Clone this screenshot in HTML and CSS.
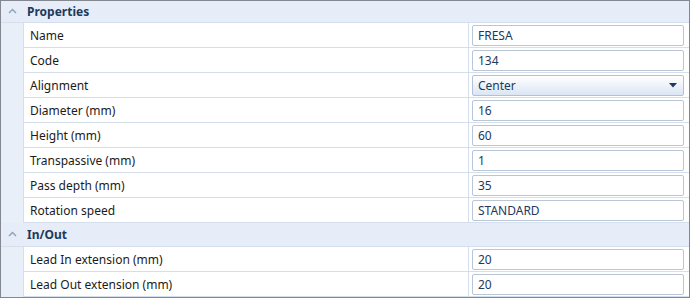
FILE: index.html
```html
<!DOCTYPE html>
<html lang="en">
  <head>
    <meta charset="UTF-8" />
    <title>Tool Properties</title>
    <link rel="stylesheet" href="styles.css">
  </head>
  <body>
    <div class="grid">
      <!-- Properties section -->
      <div class="section-header">
        <span class="chevron"><svg width="9" height="6" viewBox="0 0 9 6"><path d="M1 5 L4.5 1.5 L8 5" fill="none" stroke="#8aa0bd" stroke-width="1.4"/></svg></span>
        <span class="section-title">Properties</span>
      </div>
      <div class="row">
        <div class="gutter"></div>
        <div class="label">Name</div>
        <div class="value"><div class="field">FRESA</div></div>
      </div>
      <div class="row">
        <div class="gutter"></div>
        <div class="label">Code</div>
        <div class="value"><div class="field">134</div></div>
      </div>
      <div class="row">
        <div class="gutter"></div>
        <div class="label">Alignment</div>
        <div class="value">
          <div class="field combo">
            <span>Center</span>
            <svg class="arrow" width="8" height="5" viewBox="0 0 8 5"><path d="M0 0 H8 L4 4.5 Z" fill="#1e395b"/></svg>
          </div>
        </div>
      </div>
      <div class="row">
        <div class="gutter"></div>
        <div class="label">Diameter (mm)</div>
        <div class="value"><div class="field">16</div></div>
      </div>
      <div class="row">
        <div class="gutter"></div>
        <div class="label">Height (mm)</div>
        <div class="value"><div class="field">60</div></div>
      </div>
      <div class="row">
        <div class="gutter"></div>
        <div class="label">Transpassive (mm)</div>
        <div class="value"><div class="field">1</div></div>
      </div>
      <div class="row">
        <div class="gutter"></div>
        <div class="label">Pass depth (mm)</div>
        <div class="value"><div class="field">35</div></div>
      </div>
      <div class="row">
        <div class="gutter"></div>
        <div class="label">Rotation speed</div>
        <div class="value"><div class="field">STANDARD</div></div>
      </div>

      <!-- In/Out section -->
      <div class="section-header tall">
        <span class="chevron"><svg width="9" height="6" viewBox="0 0 9 6"><path d="M1 5 L4.5 1.5 L8 5" fill="none" stroke="#8aa0bd" stroke-width="1.4"/></svg></span>
        <span class="section-title">In/Out</span>
      </div>
      <div class="row">
        <div class="gutter"></div>
        <div class="label">Lead In extension (mm)</div>
        <div class="value"><div class="field">20</div></div>
      </div>
      <div class="row">
        <div class="gutter"></div>
        <div class="label">Lead Out extension (mm)</div>
        <div class="value"><div class="field">20</div></div>
      </div>
    </div>
  </body>
</html>
```

FILE: styles.css
```css
/* Page */
body {
  margin: 0;
  font-family: "Noto Sans", "Open Sans", sans-serif;
  font-size: 12px;
  background: #ffffff;
}

/* Property grid frame */
.grid {
  width: 690px;
  height: 298px;
  box-sizing: border-box;
  border: 1px solid #828790;
  background: #e9eff8;
  display: flex;
  flex-direction: column;
  overflow: hidden;
}

/* Category header */
.section-header {
  height: 21px;
  display: flex;
  align-items: center;
  background: #e6edf8;
  border-bottom: 1px solid #d4dfee;
  flex-shrink: 0;
}

.section-header.tall {
  height: 23px;
}

.chevron {
  width: 22px;
  display: flex;
  justify-content: center;
  align-items: center;
  padding-bottom: 2px;
}

.section-title {
  font-weight: bold;
  color: #1e395b;
  padding-left: 4px;
}

/* Property rows */
.row {
  height: 25px;
  display: flex;
  flex-shrink: 0;
}

.gutter {
  width: 22px;
  background: #e9eff8;
}

.label {
  flex: 1;
  display: flex;
  align-items: center;
  padding-left: 6px;
  background: #ffffff;
  color: #1b1b1b;
  border-left: 1px solid #d5dfec;
  border-bottom: 1px solid #d5dfec;
}

.value {
  width: 221px;
  display: flex;
  align-items: center;
  padding: 0 5px 0 3px;
  background: #ffffff;
  border-left: 1px solid #d5dfec;
  border-bottom: 1px solid #d5dfec;
  box-sizing: border-box;
}

/* Text box */
.field {
  flex: 1;
  height: 21px;
  box-sizing: border-box;
  border: 1px solid #b8c6d8;
  border-radius: 2px;
  padding-left: 5px;
  display: flex;
  align-items: center;
  color: #1e395b;
  background: #ffffff;
}

/* Drop-down */
.combo {
  justify-content: space-between;
  padding-right: 6px;
  background: linear-gradient(to bottom, #ffffff 0%, #f1f5fb 40%, #dbe5f3 100%);
  border-color: #b3c1d6;
}

.arrow {
  margin-top: 1px;
}
```
